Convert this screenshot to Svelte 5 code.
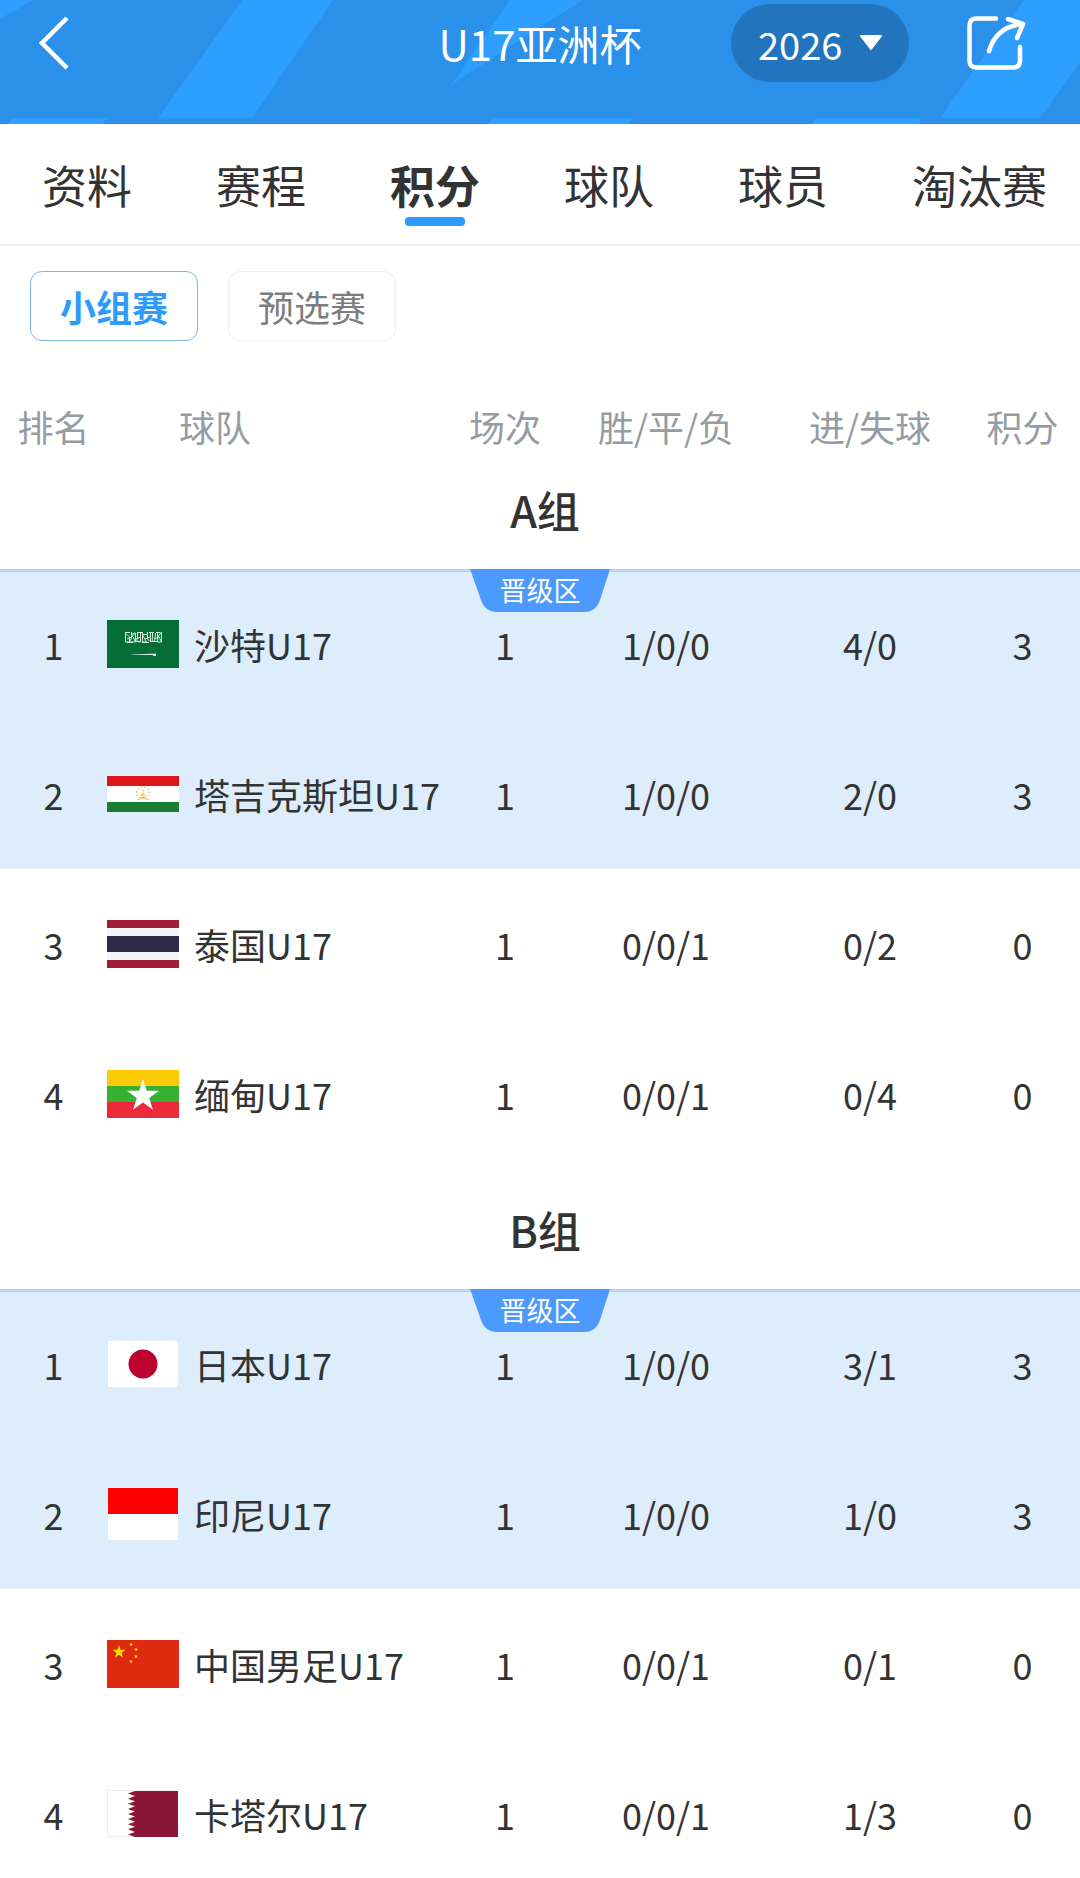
<script>
  const tabs = ['资料', '赛程', '积分', '球队', '球员', '淘汰赛'];
  const stages = ['小组赛', '预选赛'];
  const seasons = ['2026'];

  let activeTab = $state('积分');
  let activeStage = $state('小组赛');
  let season = $state('2026');

  const groups = [
    {
      name: 'A组',
      teams: [
        { flag: 'sa', name: '沙特U17', played: 1, record: '1/0/0', goals: '4/0', points: 3 },
        { flag: 'tj', name: '塔吉克斯坦U17', played: 1, record: '1/0/0', goals: '2/0', points: 3 },
        { flag: 'th', name: '泰国U17', played: 1, record: '0/0/1', goals: '0/2', points: 0 },
        { flag: 'mm', name: '缅甸U17', played: 1, record: '0/0/1', goals: '0/4', points: 0 }
      ]
    },
    {
      name: 'B组',
      teams: [
        { flag: 'jp', name: '日本U17', played: 1, record: '1/0/0', goals: '3/1', points: 3 },
        { flag: 'id', name: '印尼U17', played: 1, record: '1/0/0', goals: '1/0', points: 3 },
        { flag: 'cn', name: '中国男足U17', played: 1, record: '0/0/1', goals: '0/1', points: 0 },
        { flag: 'qa', name: '卡塔尔U17', played: 1, record: '0/0/1', goals: '1/3', points: 0 }
      ]
    }
  ];

  // Top two teams of each group go through
  const promoted = 2;

  // Points of a five-pointed star
  function star(cx, cy, r, turn = 0) {
    const points = [];
    for (let i = 0; i < 10; i++) {
      const radius = i % 2 ? r * 0.382 : r;
      const angle = (i * Math.PI) / 5 - Math.PI / 2 + turn;
      points.push(`${(cx + radius * Math.cos(angle)).toFixed(2)},${(cy + radius * Math.sin(angle)).toFixed(2)}`);
    }
    return points.join(' ');
  }

  // Serrated edge of the Qatar flag
  function serration() {
    let d = 'M71 1H28';
    for (let i = 0; i < 9; i++) {
      const y = 1 + (i * 46) / 9;
      d += `L21 ${(y + 2.55).toFixed(2)}L28 ${(y + 5.11).toFixed(2)}`;
    }
    return d + 'H71Z';
  }
</script>

{#snippet flagIcon(code)}
  <svg class="flag" viewBox="0 0 72 52" aria-hidden="true">
    {#if code === 'sa'}
      <rect y="2" width="72" height="48" fill="#056d36" />
      <g fill="none" stroke="#d5e8dc" stroke-width="1">
        <path d="M18.500 14v10h4v-5l-3-3m5-2v6l-2 4h6l-3-6 3-3v9m2-10v6q-2 4 3 4v-9m2-1v10h4l-4-7m5-3v7l3 3v-10m2 0v6q-2 3 2 4l1-9m2-1v10h4l-3-6 3-4v10" />
        <path d="M18 14.500h5m2 2l3-2m2 0h5m1 2h5m1-2h5m2 0h4M20 24.500h6m2-1h5m2 1h7m2-1h6M20 21l5-2m4 2l5-2m4 2l5-2m4 2l5-2" />
      </g>
      <path d="M23 36.500h4l22-1v2.500h-3v-1H27Z" fill="#d5e8dc" />
    {:else if code === 'tj'}
      <rect y="8" width="72" height="36" fill="#fff" />
      <rect y="8" width="72" height="10" fill="#dc161b" />
      <rect y="34" width="72" height="10" fill="#1a7c2e" />
      <g fill="none" stroke="#efc54e" stroke-width="1">
        <path d="M30 31.500q6-2 12 0M32 29.500h8M36 22v8m-3-2l3-2 3 2" />
        <path d="M30 28a6.500 6.500 0 1 1 12 0" stroke-dasharray="1.500 2" stroke-width="1.400" />
      </g>
    {:else if code === 'th'}
      <rect y="2" width="72" height="48" fill="#a01d35" />
      <rect y="10" width="72" height="32" fill="#f5f4f9" />
      <rect y="18" width="72" height="16" fill="#2e2a4b" />
    {:else if code === 'mm'}
      <rect y="2" width="72" height="16" fill="#fccb05" />
      <rect y="18" width="72" height="16" fill="#37b034" />
      <rect y="34" width="72" height="16" fill="#ec2a3a" />
      <polygon points={star(36, 28, 17)} fill="#fff" />
    {:else if code === 'jp'}
      <rect x="1" y="3" width="70" height="46" fill="#fff" />
      <circle cx="36" cy="26" r="14.500" fill="#bd0230" />
    {:else if code === 'id'}
      <rect x="1" width="70" height="26" fill="#fe0000" />
      <rect x="1" y="26" width="70" height="26" fill="#fff" />
    {:else if code === 'cn'}
      <rect y="2" width="72" height="48" fill="#de2a10" />
      <g fill="#ffde00">
        <polygon points={star(12, 14, 7)} />
        <polygon points={star(24, 6.5, 2.3, 0.4)} />
        <polygon points={star(29, 11.5, 2.3, 0.2)} />
        <polygon points={star(29, 18.5, 2.3)} />
        <polygon points={star(24, 23.5, 2.3, 0.4)} />
      </g>
    {:else if code === 'qa'}
      <rect x="0.500" y="2.500" width="70" height="46" fill="#fff" stroke="#ececec" />
      <path d={serration()} transform="translate(0 2)" fill="#8a1538" />
    {/if}
  </svg>
{/snippet}

<div class="page">
  <header class="top-bar">
    <svg class="stripes" viewBox="0 0 1080 124" preserveAspectRatio="none" aria-hidden="true">
      <g fill="#2e9fff">
        <path d="M0 0H33L0 19Z" />
        <path d="M242 0H333L252 118H158Z" />
        <path d="M510 0H583L540 27L451 85Z" />
        <path d="M1024 0H1080V62L1040 118H940Z" />
        <path d="M13 118H108L102 124H7Z" />
        <path d="M494 118H632L628 124H488Z" />
        <path d="M816 118H920V124H811Z" />
      </g>
    </svg>

    <button type="button" class="icon-button back" aria-label="返回">
      <svg width="30" height="56" viewBox="0 0 30 56" fill="none" stroke="#fff" stroke-width="4.500">
        <path d="M28 3L3 28L28 53" />
      </svg>
    </button>

    <h1>U17亚洲杯</h1>

    <div class="actions">
      <label class="season">
        <select bind:value={season} aria-label="赛季">
          {#each seasons as item}
            <option value={item}>{item}</option>
          {/each}
        </select>
        <svg class="caret" width="24" height="16" viewBox="0 0 24 16" aria-hidden="true">
          <path d="M2 1H22L12 14Z" fill="#fff" stroke="#fff" stroke-width="2" stroke-linejoin="round" />
        </svg>
      </label>
      <button type="button" class="icon-button" aria-label="分享">
        <svg width="60" height="56" viewBox="0 0 60 56" fill="none" stroke="#fff" stroke-width="4.500" stroke-linecap="round" stroke-linejoin="round">
          <path d="M30 3.500H10.500Q3.500 3.500 3.500 10.500V45.500Q3.500 52.500 10.500 52.500H47Q54 52.500 54 45.500V32" />
          <path d="M23 36Q30 12 56 9" />
          <path d="M42 4L57 9L51 23" />
        </svg>
      </button>
    </div>
  </header>

  <nav class="tabs">
    {#each tabs as tab}
      <button
        type="button"
        class="tab {activeTab === tab ? 'active' : ''}"
        onclick={() => (activeTab = tab)}
      >
        {tab}
      </button>
    {/each}
  </nav>

  <main>
    <div class="stages">
      {#each stages as stage}
        <button
          type="button"
          class="stage {activeStage === stage ? 'active' : ''}"
          onclick={() => (activeStage = stage)}
        >
          {stage}
        </button>
      {/each}
    </div>

    <table>
      <colgroup>
        <col class="col-rank" />
        <col />
        <col class="col-played" />
        <col class="col-record" />
        <col class="col-goals" />
        <col class="col-points" />
      </colgroup>
      <thead>
        <tr>
          <th scope="col">排名</th>
          <th scope="col" class="team-head">球队</th>
          <th scope="col">场次</th>
          <th scope="col">胜/平/负</th>
          <th scope="col">进/失球</th>
          <th scope="col">积分</th>
        </tr>
      </thead>
      {#each groups as group}
        <tbody>
          <tr>
            <th scope="rowgroup" colspan="6" class="group-name">{group.name}</th>
          </tr>
          {#each group.teams as team, i}
            <tr class="team-row" class:promoted={i < promoted} class:first={i === 0}>
              <td>
                {i + 1}
                {#if i === 0}
                  <span class="zone-label">
                    <svg viewBox="0 0 140 43" aria-hidden="true">
                      <path d="M0 0H140L130 31Q126 43 114 43H27Q15 43 11 31Z" fill="#4c9afd" />
                    </svg>
                    <span>晋级区</span>
                  </span>
                {/if}
              </td>
              <td>
                <div class="team">
                  {@render flagIcon(team.flag)}
                  <span>{team.name}</span>
                </div>
              </td>
              <td>{team.played}</td>
              <td>{team.record}</td>
              <td>{team.goals}</td>
              <td>{team.points}</td>
            </tr>
          {/each}
        </tbody>
      {/each}
    </table>
  </main>
</div>

<style>
  :global(body) {
    background: #fff;
  }

  .page {
    font-family: "Noto Sans CJK SC", sans-serif;
    color: #333;
    overflow: hidden;
  }

  button,
  select {
    font-family: inherit;
    border: none;
    background: none;
    padding: 0;
    margin: 0;
    cursor: pointer;
  }

  /* Top bar */
  .top-bar {
    position: relative;
    display: grid;
    grid-template-columns: 1fr auto 1fr;
    align-items: center;
    padding: 4px 39px 42px;
    background: #2b90ea;
    color: #fff;
  }

  .stripes {
    position: absolute;
    inset: 0;
    width: 100%;
    height: 100%;
  }

  .top-bar > :not(.stripes) {
    position: relative;
  }

  .icon-button {
    display: flex;
  }

  .back {
    justify-self: start;
  }

  h1 {
    margin: 0;
    font-size: 42px;
    line-height: 60px;
    font-weight: 400;
  }

  .actions {
    display: flex;
    align-items: center;
    justify-content: flex-end;
    gap: 57px;
    padding-right: 15px;
  }

  .season {
    position: relative;
    display: flex;
  }

  .season select {
    appearance: none;
    width: 178px;
    height: 78px;
    padding-left: 27px;
    border-radius: 39px;
    background: #2274bd;
    color: #fff;
    font-size: 38px;
  }

  .season option {
    color: #333;
  }

  .caret {
    position: absolute;
    right: 26px;
    top: 31px;
    pointer-events: none;
  }

  /* Tabs */
  .tabs {
    display: flex;
    justify-content: space-between;
    padding: 0 33px 0 42px;
    border-bottom: 2px solid #eee;
  }

  .tab {
    position: relative;
    height: 120px;
    font-size: 45px;
    color: #333;
  }

  .tab.active {
    font-weight: 700;
  }

  .tab.active::after {
    content: '';
    position: absolute;
    left: 50%;
    bottom: 18px;
    width: 60px;
    height: 9px;
    margin-left: -30px;
    border-radius: 4px;
    background: #2e9bfb;
  }

  /* Stage filter */
  .stages {
    display: flex;
    gap: 30px;
    padding: 25px 30px;
  }

  .stage {
    height: 70px;
    padding: 0 29px;
    border: 1px solid #eee;
    border-radius: 12px;
    font-size: 36px;
    color: #7d7d7d;
  }

  .stage.active {
    border-color: #7ab8e4;
    font-weight: 700;
    color: #2e9bfb;
  }

  /* Standings */
  table {
    width: 100%;
    table-layout: fixed;
    border-collapse: separate;
    border-spacing: 0;
    font-size: 36px;
    line-height: 42px;
    text-align: center;
  }

  .col-rank {
    width: 107px;
  }

  .col-played {
    width: 104px;
  }

  .col-record {
    width: 218px;
  }

  .col-goals {
    width: 190px;
  }

  .col-points {
    width: 115px;
  }

  th,
  td {
    box-sizing: border-box;
    padding: 0;
  }

  thead th {
    height: 83px;
    padding-top: 37px;
    font-weight: 400;
    color: #979ba3;
  }

  .team-head {
    padding-left: 72px;
    text-align: left;
  }

  .group-name {
    height: 120px;
    padding-left: 10px;
    font-size: 43px;
    font-weight: 500;
  }

  .team-row {
    position: relative;
  }

  .team-row td {
    height: 150px;
  }

  .promoted td {
    background: #ddedfc;
  }

  .promoted.first td {
    box-shadow: inset 0 3px #b8d3ea;
  }

  .team {
    display: flex;
    align-items: center;
    gap: 15px;
    white-space: nowrap;
  }

  .flag {
    flex: none;
    width: 72px;
    height: 52px;
  }

  .zone-label {
    position: absolute;
    top: 0;
    left: 50%;
    width: 140px;
    height: 43px;
    margin-left: -70px;
    font-size: 27px;
    color: #fff;
  }

  .zone-label svg {
    position: absolute;
    inset: 0;
  }

  .zone-label span {
    position: relative;
  }
</style>
